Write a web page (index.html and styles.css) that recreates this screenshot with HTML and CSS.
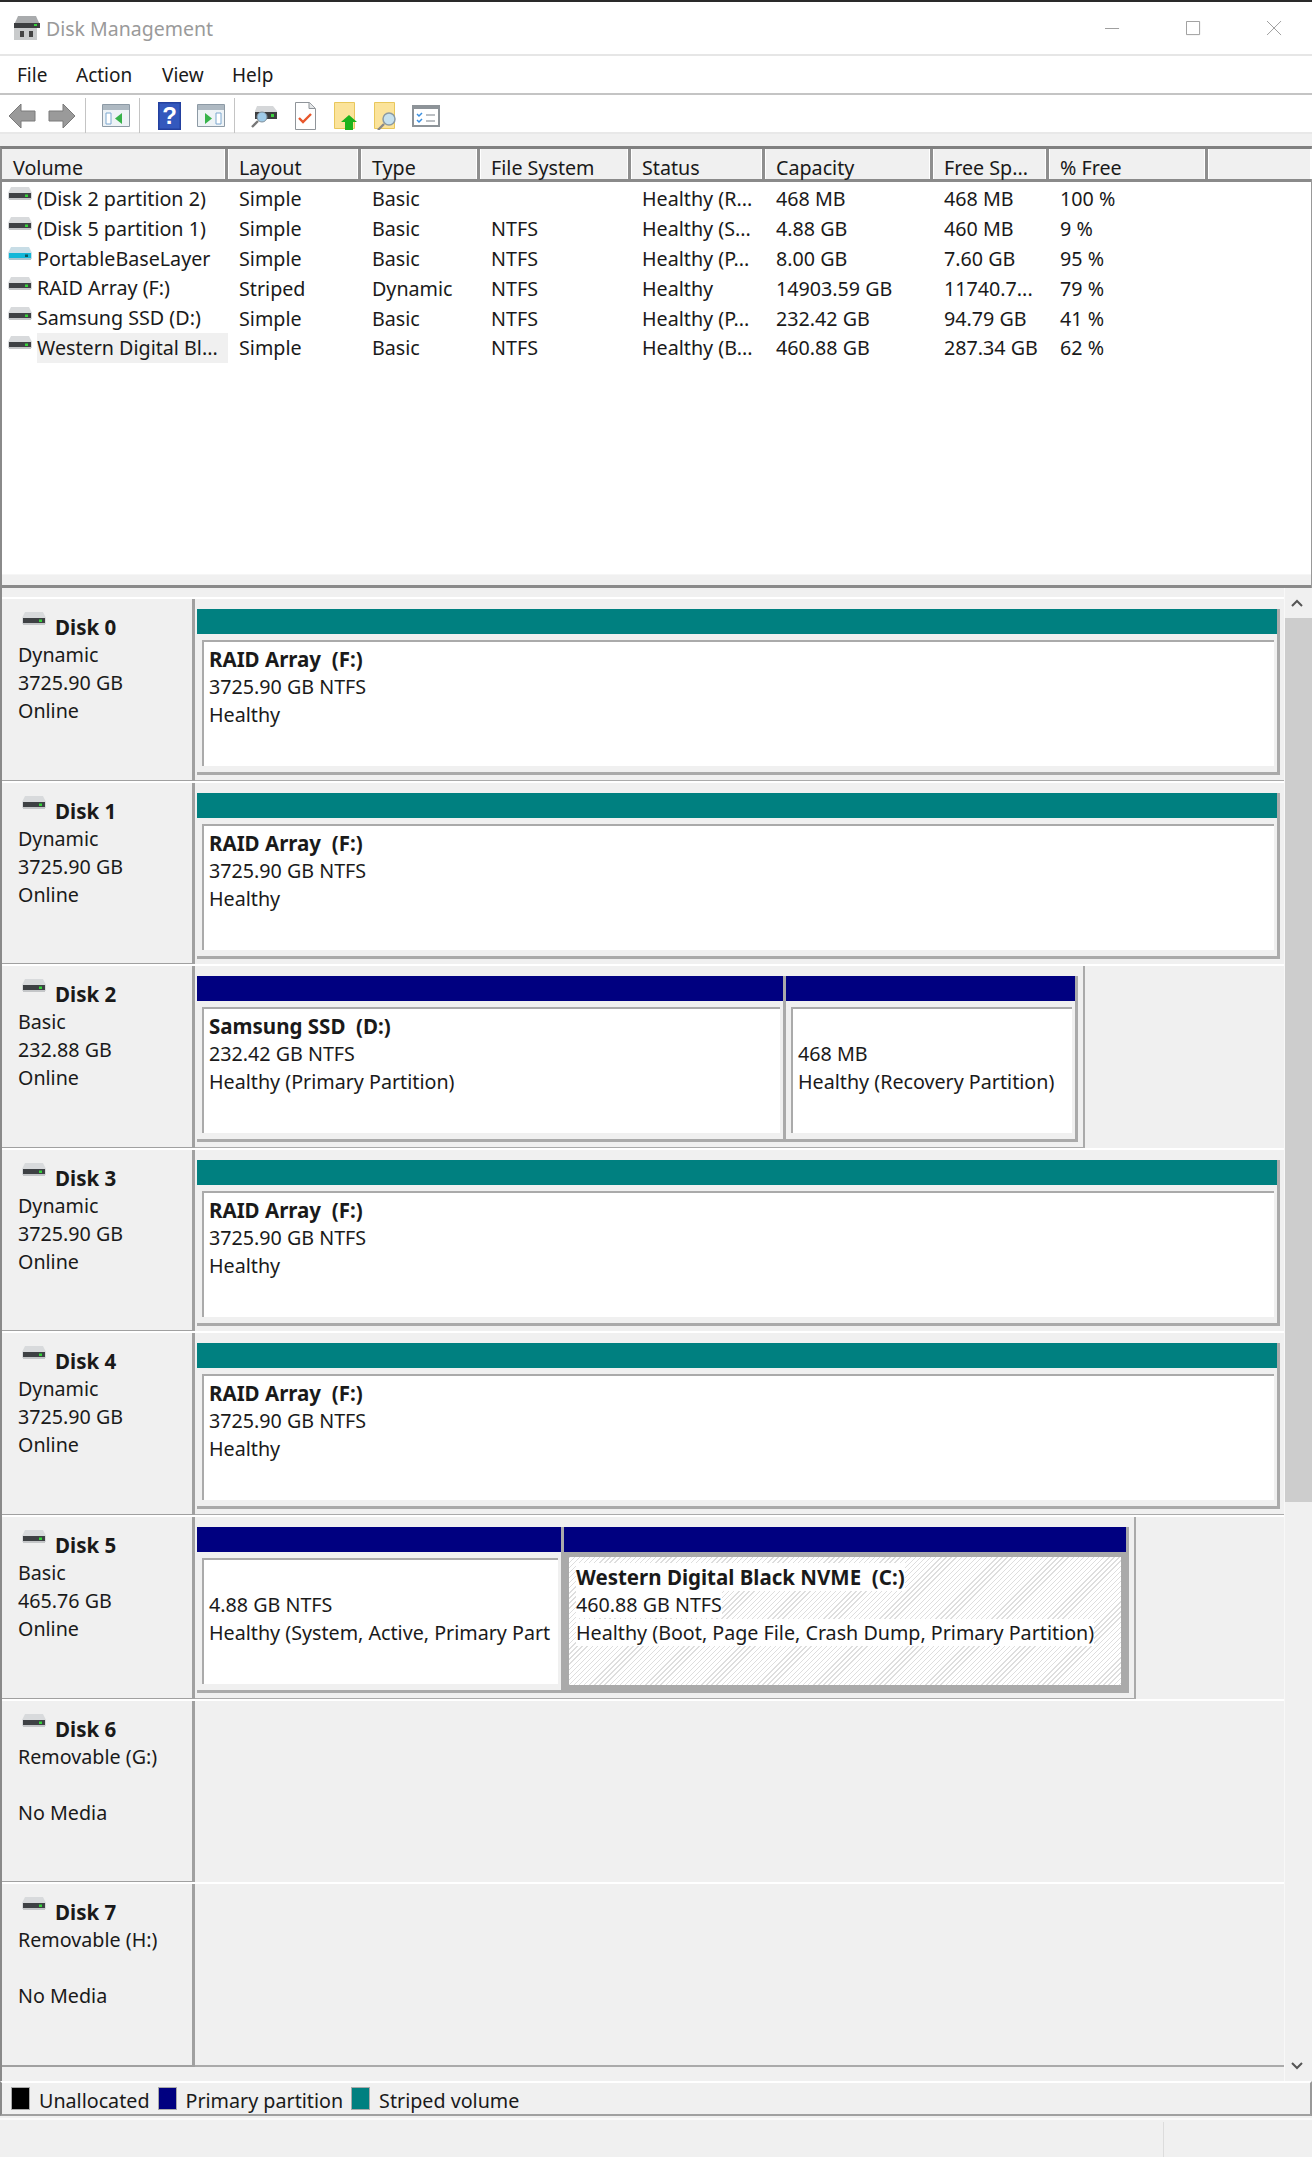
FILE: index.html
```
<!DOCTYPE html>
<html lang="en">
<head>
<meta charset="utf-8">
<title>Disk Management</title>
<link rel="stylesheet" href="styles.css">
</head>
<body>
<svg class="defs" width="0" height="0" aria-hidden="true">
  <symbol id="hdd" viewBox="0 0 24 14">
    <path d="M3 0h18l3 6v6H0V6z" fill="#d8dadc"/>
    <path d="M1 6h22v6H1z" fill="#3e4144"/>
    <path d="M1 11h22v2H1z" fill="#c4c6c8"/>
    <path d="M17 7.5h3v2.5h-3z" fill="#35d23a"/>
  </symbol>
  <symbol id="hddc" viewBox="0 0 24 14">
    <path d="M3 0h18l3 6v6H0V6z" fill="#c8dde6"/>
    <path d="M1 6h22v6H1z" fill="#12b7d8"/>
    <path d="M1 11h22v2H1z" fill="#a8c6d0"/>
    <path d="M17 7.5h3v2.5h-3z" fill="#0b5560"/>
  </symbol>
</svg>
<div class="win">
  <header class="title">
    <svg class="app" viewBox="0 0 28 28"><path d="M5 2h18l4 9H1z" fill="#a9abad"/><path d="M1 9h26v5H1z" fill="#3c3e40"/><path d="M21 10h3v2h-3z" fill="#36d33c"/><path d="M1 14h23v12H1z" fill="#c9cbcc"/><path d="M7 17h4v6H7zM16 17h4v6h-4z" fill="#444"/></svg>
    <span class="app-name">Disk Management</span>
    <div class="caption">
      <svg viewBox="0 0 16 16"><path d="M0 8h15" stroke="#999" fill="none"/></svg>
      <svg viewBox="0 0 16 16"><path d="M.5.5h14v14H.5z" stroke="#999" fill="none"/></svg>
      <svg viewBox="0 0 16 16"><path d="M0 0l15 15M15 0L0 15" stroke="#999" fill="none"/></svg>
    </div>
  </header>
  <nav class="menu"><span>File</span><span>Action</span><span>View</span><span>Help</span></nav>
  <div class="tools">
    <svg class="t t-back" viewBox="0 0 28 26"><path d="M1 13L13 1v7h14v10H13v7z" fill="#9a9a9a" stroke="#7a7a7a"/></svg>
    <svg class="t t-fwd" viewBox="0 0 28 26"><path d="M27 13L15 1v7H1v10h14v7z" fill="#9a9a9a" stroke="#7a7a7a"/></svg>
    <i class="sep s1"></i>
    <svg class="t t-a" viewBox="0 0 28 23"><path d="M.5.5h27v22H.5z" fill="#eef3f6" stroke="#8d9aa5"/><path d="M1 1h26v5H1z" fill="#aeb9c2"/><path d="M4 9h5v11H4z" fill="#fff" stroke="#7aa7d0"/><path d="M20 9l-7 5.5 7 5.5z" fill="#37b34a"/></svg>
    <i class="sep s2"></i>
    <svg class="t t-h" viewBox="0 0 23 28"><path d="M0 0h23v28H0z" fill="#23409f"/><path d="M1.500 1.500h20v25h-20z" fill="#3358bd"/><text x="11.500" y="22" class="q">?</text></svg>
    <svg class="t t-b" viewBox="0 0 28 23"><path d="M.5.5h27v22H.5z" fill="#eef3f6" stroke="#8d9aa5"/><path d="M1 1h26v5H1z" fill="#aeb9c2"/><path d="M19 9h5v11h-5z" fill="#fff" stroke="#7aa7d0"/><path d="M8 9l7 5.5-7 5.5z" fill="#37b34a"/></svg>
    <i class="sep s3"></i>
    <svg class="t t-c" viewBox="0 0 27 24"><path d="M6 2h16l4 5v8H4V7z" fill="#d5d7d9"/><path d="M4 8h22v7H4z" fill="#3c3e40"/><path d="M20 10h3v3h-3z" fill="#3bd23f"/><circle cx="11" cy="13" r="5" fill="#9fcbe8" stroke="#7e8e9a"/><path d="M7 17l-6 6" stroke="#777" stroke-width="2.4"/></svg>
    <svg class="t t-d" viewBox="0 0 21 28"><path d="M.5.5h14l6 6v21H.5z" fill="#fff" stroke="#8f9499"/><path d="M14 .5v6h6" fill="#e4e6e8" stroke="#8f9499"/><path d="M4 16l4 4 8-8" fill="none" stroke="#e8562b" stroke-width="2.4"/></svg>
    <svg class="t t-e" viewBox="0 0 23 28"><path d="M.5.5h20v26H.5z" fill="#fbe39a" stroke="#e8c75c"/><path d="M15 13l8 7h-4v8h-8v-8H7z" fill="#1cb31c"/></svg>
    <svg class="t t-f" viewBox="0 0 23 28"><path d="M.5.5h20v26H.5z" fill="#fbe39a" stroke="#e8c75c"/><circle cx="15" cy="17" r="6" fill="#c6e1ee" stroke="#8b9aa3" stroke-width="1.5"/><path d="M10 22l-6 6" stroke="#888" stroke-width="2.4"/></svg>
    <svg class="t t-g" viewBox="0 0 28 22"><path d="M1 1h26v20H1z" fill="#fff" stroke="#8d9398" stroke-width="2"/><path d="M1 1h26v3H1z" fill="#8d9398"/><path d="M5 9l2 2 3-3M5 15l2 2 3-3" fill="none" stroke="#3a8fe0" stroke-width="1.5"/><path d="M14 10h9M14 16h9" stroke="#a5abb0" stroke-width="1.5"/></svg>
  </div>
  <div class="band"></div>
  <section class="list">
    <div class="row head">
      <b class="c c1">Volume</b><b class="c c2">Layout</b><b class="c c3">Type</b><b class="c c4">File System</b><b class="c c5">Status</b><b class="c c6">Capacity</b><b class="c c7">Free Sp...</b><b class="c c8">% Free</b><b class="c c9"></b>
    </div>
    <div class="row"><span class="c c1"><svg class="ri"><use href="#hdd"/></svg><span class="rn">(Disk 2 partition 2)</span></span><span class="c c2">Simple</span><span class="c c3">Basic</span><span class="c c4"></span><span class="c c5">Healthy (R...</span><span class="c c6">468 MB</span><span class="c c7">468 MB</span><span class="c c8">100 %</span></div>
    <div class="row"><span class="c c1"><svg class="ri"><use href="#hdd"/></svg><span class="rn">(Disk 5 partition 1)</span></span><span class="c c2">Simple</span><span class="c c3">Basic</span><span class="c c4">NTFS</span><span class="c c5">Healthy (S...</span><span class="c c6">4.88 GB</span><span class="c c7">460 MB</span><span class="c c8">9 %</span></div>
    <div class="row"><span class="c c1"><svg class="ri"><use href="#hddc"/></svg><span class="rn">PortableBaseLayer</span></span><span class="c c2">Simple</span><span class="c c3">Basic</span><span class="c c4">NTFS</span><span class="c c5">Healthy (P...</span><span class="c c6">8.00 GB</span><span class="c c7">7.60 GB</span><span class="c c8">95 %</span></div>
    <div class="row"><span class="c c1"><svg class="ri"><use href="#hdd"/></svg><span class="rn">RAID Array (F:)</span></span><span class="c c2">Striped</span><span class="c c3">Dynamic</span><span class="c c4">NTFS</span><span class="c c5">Healthy</span><span class="c c6">14903.59 GB</span><span class="c c7">11740.7...</span><span class="c c8">79 %</span></div>
    <div class="row"><span class="c c1"><svg class="ri"><use href="#hdd"/></svg><span class="rn">Samsung SSD (D:)</span></span><span class="c c2">Simple</span><span class="c c3">Basic</span><span class="c c4">NTFS</span><span class="c c5">Healthy (P...</span><span class="c c6">232.42 GB</span><span class="c c7">94.79 GB</span><span class="c c8">41 %</span></div>
    <div class="row"><span class="c c1"><svg class="ri"><use href="#hdd"/></svg><span class="rn sel">Western Digital Bl...</span></span><span class="c c2">Simple</span><span class="c c3">Basic</span><span class="c c4">NTFS</span><span class="c c5">Healthy (B...</span><span class="c c6">460.88 GB</span><span class="c c7">287.34 GB</span><span class="c c8">62 %</span></div>
    <div class="list-foot"></div>
  </section>
  <section class="graph">
    <div class="disks">
      <div class="disk">
        <div class="lab"><div class="dn"><svg class="di"><use href="#hdd"/></svg><b>Disk 0</b></div><div>Dynamic</div><div>3725.90 GB</div><div>Online</div></div>
        <div class="parts full"><div class="inner"><div class="part grow"><div class="bar teal"></div><div class="vol"><b>RAID Array&nbsp; (F:)</b><span>3725.90 GB NTFS</span><span>Healthy</span></div></div></div></div>
      </div>
      <div class="disk">
        <div class="lab"><div class="dn"><svg class="di"><use href="#hdd"/></svg><b>Disk 1</b></div><div>Dynamic</div><div>3725.90 GB</div><div>Online</div></div>
        <div class="parts full"><div class="inner"><div class="part grow"><div class="bar teal"></div><div class="vol"><b>RAID Array&nbsp; (F:)</b><span>3725.90 GB NTFS</span><span>Healthy</span></div></div></div></div>
      </div>
      <div class="disk">
        <div class="lab"><div class="dn"><svg class="di"><use href="#hdd"/></svg><b>Disk 2</b></div><div>Basic</div><div>232.88 GB</div><div>Online</div></div>
        <div class="parts"><div class="inner"><div class="part w-ss"><div class="bar navy"></div><div class="vol"><b>Samsung SSD&nbsp; (D:)</b><span>232.42 GB NTFS</span><span>Healthy (Primary Partition)</span></div></div><div class="part w-rec"><div class="bar navy"></div><div class="vol"><b>&nbsp;</b><span>468 MB</span><span>Healthy (Recovery Partition)</span></div></div></div></div>
      </div>
      <div class="disk">
        <div class="lab"><div class="dn"><svg class="di"><use href="#hdd"/></svg><b>Disk 3</b></div><div>Dynamic</div><div>3725.90 GB</div><div>Online</div></div>
        <div class="parts full"><div class="inner"><div class="part grow"><div class="bar teal"></div><div class="vol"><b>RAID Array&nbsp; (F:)</b><span>3725.90 GB NTFS</span><span>Healthy</span></div></div></div></div>
      </div>
      <div class="disk">
        <div class="lab"><div class="dn"><svg class="di"><use href="#hdd"/></svg><b>Disk 4</b></div><div>Dynamic</div><div>3725.90 GB</div><div>Online</div></div>
        <div class="parts full"><div class="inner"><div class="part grow"><div class="bar teal"></div><div class="vol"><b>RAID Array&nbsp; (F:)</b><span>3725.90 GB NTFS</span><span>Healthy</span></div></div></div></div>
      </div>
      <div class="disk">
        <div class="lab"><div class="dn"><svg class="di"><use href="#hdd"/></svg><b>Disk 5</b></div><div>Basic</div><div>465.76 GB</div><div>Online</div></div>
        <div class="parts"><div class="inner"><div class="part w-sys"><div class="bar navy"></div><div class="vol"><b>&nbsp;</b><span>4.88 GB NTFS</span><span>Healthy (System, Active, Primary Part</span></div></div><div class="part w-wd"><div class="bar navy"></div><div class="vol hatch"><b><em>Western Digital Black NVME&nbsp; (C:)</em></b><span><em>460.88 GB NTFS</em></span><span><em>Healthy (Boot, Page File, Crash Dump, Primary Partition)</em></span></div></div></div></div>
      </div>
      <div class="disk">
        <div class="lab"><div class="dn"><svg class="di"><use href="#hdd"/></svg><b>Disk 6</b></div><div>Removable (G:)</div><div>&nbsp;</div><div>No Media</div></div>
        <div class="parts none"></div>
      </div>
      <div class="disk">
        <div class="lab"><div class="dn"><svg class="di"><use href="#hdd"/></svg><b>Disk 7</b></div><div>Removable (H:)</div><div>&nbsp;</div><div>No Media</div></div>
        <div class="parts none"></div>
      </div>
    </div>
    <div class="sb">
      <svg class="ar" viewBox="0 0 12 8"><path d="M1 7l5-5 5 5" fill="none" stroke="#555" stroke-width="2"/></svg>
      <div class="track"><div class="thumb"></div></div>
      <svg class="ar" viewBox="0 0 12 8"><path d="M1 1l5 5 5-5" fill="none" stroke="#555" stroke-width="2"/></svg>
    </div>
  </section>
  <section class="legend">
    <i class="sw k"></i><span>Unallocated</span>
    <i class="sw n"></i><span>Primary partition</span>
    <i class="sw g"></i><span>Striped volume</span>
  </section>
  <footer class="status"><i></i></footer>
</div>
</body>
</html>
```
FILE: styles.css
```
* { box-sizing: border-box; }
html, body { margin: 0; padding: 0; }
body { background: #f0f0f0; font-family: "Noto Sans", "Open Sans", sans-serif; font-size: 19.7px; color: #1a1a1a; }
.defs { position: absolute; }
.win { width: 1312px; height: 2157px; display: flex; flex-direction: column; overflow: hidden; }

.title { height: 56px; flex: none; background: #fff; border-top: 2px solid #2a2a2a; border-bottom: 2px solid #e6e6e6; display: flex; align-items: center; padding-left: 13px; }
.app { width: 28px; height: 28px; margin-right: 5px; }
.app-name { color: #9a9a9a; font-size: 19.5px; }
.caption { margin-left: auto; display: flex; gap: 66px; padding-right: 30px; }
.caption svg { width: 15px; height: 15px; }

.menu { height: 39px; flex: none; background: #fff; border-bottom: 2px solid #c4c4c4; display: flex; align-items: center; font-size: 19px; padding-left: 17px; }
.menu span:nth-child(1) { width: 59px; }
.menu span:nth-child(2) { width: 86px; }
.menu span:nth-child(3) { width: 70px; }

.tools { height: 39px; flex: none; background: #fff; border-bottom: 2px solid #e8e8e8; display: flex; align-items: center; padding: 4px 0 0 8px; }
.t { flex: none; display: block; }
.t-back, .t-fwd { width: 28px; height: 26px; }
.t-fwd { margin-left: 12px; }
.sep { width: 1px; height: 35px; background: #c4c4c4; flex: none; }
.s1 { margin-left: 9px; }
.t-a { width: 28px; height: 23px; margin-left: 16px; }
.s2 { margin-left: 9px; }
.t-h { width: 23px; height: 28px; margin-left: 18px; }
.q { font-family: "Liberation Sans", sans-serif; font-weight: 700; font-size: 24px; fill: #fff; text-anchor: middle; }
.t-b { width: 28px; height: 23px; margin-left: 16px; }
.s3 { margin-left: 9px; }
.t-c { width: 27px; height: 24px; margin-left: 16px; }
.t-d { width: 21px; height: 28px; margin-left: 17px; }
.t-e { width: 23px; height: 28px; margin-left: 18px; }
.t-f { width: 23px; height: 28px; margin-left: 17px; }
.t-g { width: 28px; height: 22px; margin-left: 15px; }

.band { height: 12px; flex: none; background: #f0f0f0; }

.list { height: 442px; flex: none; background: #fff; border-top: 3px solid #808080; border-left: 2px solid #8a8a8a; display: flex; flex-direction: column; border-right: 1px solid #999; }
.row { display: flex; height: 29.8px; flex: none; align-items: center; white-space: nowrap; padding-top: 4px; }
.head { height: 33px; background: #f0f0f0; border-bottom: 3px solid #8a8a8a; padding-top: 0; }
.head b { font-weight: 400; height: 100%; display: flex; align-items: center; border-right: 3px solid #8f8f8f; box-shadow: inset -1px 0 0 #fff, 1px 0 0 #fff; }
.c { display: flex; align-items: center; padding-left: 11px; flex: none; }
.head .c { padding-top: 6px; }
.c1 { width: 226px; padding-left: 6px; }
.head .c1 { padding-left: 11px; }
.c2 { width: 133px; }
.c3 { width: 119px; }
.c4 { width: 151px; }
.c5 { width: 134px; }
.c6 { width: 168px; }
.c7 { width: 116px; }
.c8 { width: 159px; }
.head .c9 { flex: 1; border-right: 0; }
.ri { width: 24px; height: 14px; margin-right: 5px; margin-top: -9px; }
.rn { padding: 0 6px 0 0; height: 30px; line-height: 30px; flex: 1; margin-top: 0; }
.sel { background: #f0f0f0; }
.list-foot { margin-top: auto; height: 14px; background: #f0f0f0; border-bottom: 3px solid #8a8a8a; border-top: 1px solid #f6f6f6; }

.graph { height: 1493px; flex: none; display: flex; border-left: 2px solid #8a8a8a; padding-top: 9px; }
.disks { flex: 1; min-width: 0; display: flex; flex-direction: column; }
.disk { height: 183.6px; flex: none; display: flex; border-top: 2px solid #fff; }
.lab { width: 193px; flex: none; padding: 14px 0 0 16px; line-height: 28px; border-right: 3px solid #a0a0a0; border-bottom: 2px solid #a0a0a0; margin-bottom: -1px; }
.dn { display: flex; align-items: flex-start; }
.dn b { font-weight: 700; font-size: 20.5px; }
.di { width: 24px; height: 14px; margin: -1px 9px 0 4px; }

.parts { display: flex; flex: none; width: fit-content; padding: 10px 5px 5px 2px; border-right: 2px solid #aaa; border-bottom: 2px solid #aaa; height: 183px; margin-bottom: -2px; }
.parts.full { flex: 1; width: auto; border-right: 0; padding-right: 4px; }
.parts.none { flex: 1; width: auto; border-right: 0; padding: 0; }
.inner { display: flex; flex: 1; border-right: 3px solid #aaa; border-bottom: 3px solid #aaa; }
.part { display: flex; flex-direction: column; flex: none; }
.grow { flex: 1; }
.w-ss { width: 586px; }
.w-rec { width: 292px; }
.w-sys { width: 364px; }
.w-wd { width: 565px; }
.part + .part { border-left: 3px solid #aaa; }
.bar { height: 25px; flex: none; }
.teal { background: #008080; }
.navy { background: #000080; }
.vol { margin: 6px 3px 6px 5px; flex: 1; background: #fff; border-top: 2px solid #aaa; border-left: 2px solid #aaa; padding: 3px 0 0 5px; display: flex; flex-direction: column; line-height: 28px; white-space: nowrap; overflow: hidden; }
.vol b { font-weight: 700; font-size: 20.5px; }
.hatch { margin: 0; border: 5px solid #aaa; padding: 6px 0 0 7px; background: repeating-linear-gradient(135deg, #dedede 0 1px, #fff 1px 3.6px); }
.hatch em { font-style: normal; background: #fff; }

.sb { width: 28px; flex: none; display: flex; flex-direction: column; align-items: center; border-left: 1px solid #f8f8f8; margin-top: -9px; }
.ar { width: 12px; height: 8px; flex: none; margin: 11px 3px 11px 0; }
.track { flex: 1; width: 100%; }
.thumb { height: 884px; background: #cdcdcd; }

.legend { height: 35px; flex: none; border-top: 2px solid #fff; border-left: 2px solid #8a8a8a; border-right: 2px solid #999; border-bottom: 2px solid #a0a0a0; display: flex; align-items: center; padding-left: 9px; }
.legend span { margin-right: 8px; padding-top: 3px; }
.sw { width: 19px; height: 23px; margin-right: 9px; border: 1px solid #aaa; flex: none; }
.k { background: #000; }
.n { background: #000080; }
.g { background: #008080; }

.status { flex: 1; border-top: 2px solid #fafafa; margin-top: 2px; display: flex; justify-content: flex-end; padding: 2px 148px 0 0; }
.status i { width: 1px; background: #dcdcdc; }
```
